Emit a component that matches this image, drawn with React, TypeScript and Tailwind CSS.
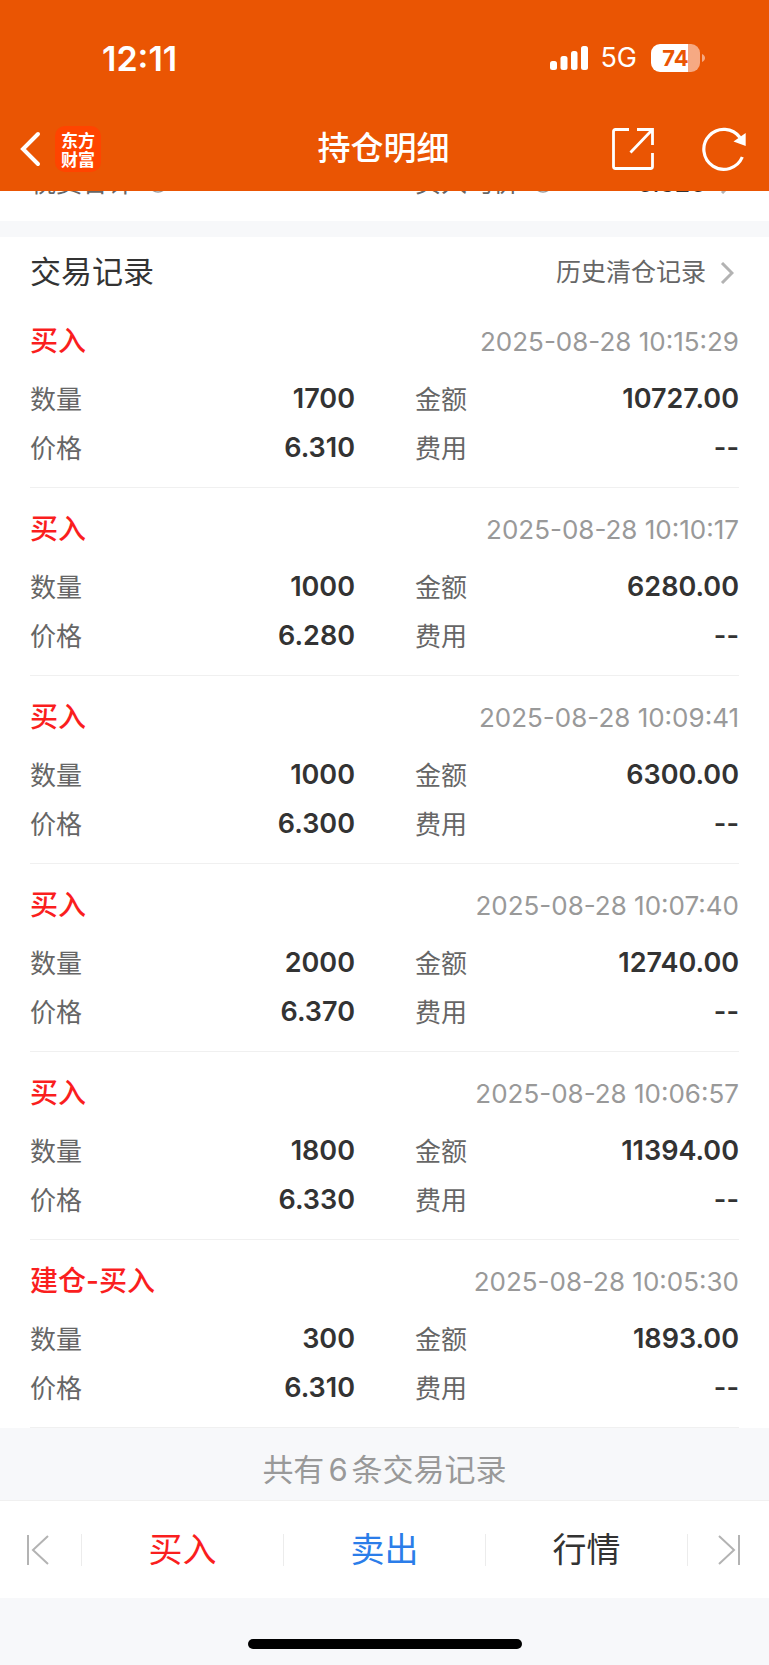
const FONT = "font-['Inter','Noto_Sans_CJK_SC',sans-serif]";

type Trade = {
  kind: string;
  time: string;
  quantity: string;
  price: string;
  amount: string;
  fee: string;
};

const trades: Trade[] = [
  { kind: '买入', time: '2025-08-28 10:15:29', quantity: '1700', price: '6.310', amount: '10727.00', fee: '--' },
  { kind: '买入', time: '2025-08-28 10:10:17', quantity: '1000', price: '6.280', amount: '6280.00', fee: '--' },
  { kind: '买入', time: '2025-08-28 10:09:41', quantity: '1000', price: '6.300', amount: '6300.00', fee: '--' },
  { kind: '买入', time: '2025-08-28 10:07:40', quantity: '2000', price: '6.370', amount: '12740.00', fee: '--' },
  { kind: '买入', time: '2025-08-28 10:06:57', quantity: '1800', price: '6.330', amount: '11394.00', fee: '--' },
  { kind: '建仓-买入', time: '2025-08-28 10:05:30', quantity: '300', price: '6.310', amount: '1893.00', fee: '--' },
];

function StatusBar() {
  return (
    <div className="flex h-[106px] items-center justify-between pt-[10px] pr-[64px] pl-[102px]">
      <span className="text-[34px] font-semibold">12:11</span>
      <div className="flex items-center">
        <svg width="38" height="24" viewBox="0 0 38 24" fill="currentColor" aria-hidden="true">
          <rect x="0" y="15" width="7" height="9" rx="2.500" />
          <rect x="10.500" y="10" width="7" height="14" rx="2.500" />
          <rect x="21" y="5" width="6.500" height="19" rx="2.500" />
          <rect x="31" y="0" width="7" height="24" rx="2.500" />
        </svg>
        <span className="ml-3 text-[27px]">5G</span>
        <div className="ml-[14px] flex items-center gap-[2px]">
          <div className="flex h-7 w-[49px] items-center justify-center rounded-[9px] bg-linear-to-r from-white from-75% to-[#f6a983] to-75% text-[22px] font-bold text-[#ea5503]">
            74
          </div>
          <svg width="3" height="8" viewBox="0 0 3 8" fill="#f6a983" aria-hidden="true">
            <path d="M0 0C4 1.500 4 6.500 0 8Z" />
          </svg>
        </div>
      </div>
    </div>
  );
}

function NavBar() {
  return (
    <div className="grid h-[85px] grid-cols-[1fr_auto_1fr] items-center pr-[21px] pl-[19px]">
      <div className="flex items-center gap-[13px]">
        <button type="button" aria-label="返回">
          <svg width="23" height="36" viewBox="0 0 23 36" fill="none" stroke="currentColor" strokeWidth="4" strokeLinecap="round" aria-hidden="true">
            <path d="M19 3L4 18L19 33" />
          </svg>
        </button>
        <div className="flex size-[46px] flex-col items-center justify-center rounded-[10px] bg-[#ff4400] font-['Noto_Sans_CJK_SC',sans-serif] text-[17px] leading-[19px] font-bold">
          <span>东方</span>
          <span>财富</span>
        </div>
      </div>
      <h1 className="text-[33px] font-medium">持仓明细</h1>
      <div className="flex items-center justify-end gap-[47px]">
        <button type="button" aria-label="分享">
          <svg width="44" height="44" viewBox="0 0 44 44" fill="none" stroke="currentColor" strokeWidth="2.800" aria-hidden="true">
            <path d="M18 2.500H4.500Q2.500 2.500 2.500 4.500V39.500Q2.500 41.500 4.500 41.500H39.500Q41.500 41.500 41.500 39.500V26" />
            <path d="M26 2.500H41.500V18M41 3L19.500 25.500" />
          </svg>
        </button>
        <button type="button" aria-label="刷新">
          <svg width="46" height="46" viewBox="0 0 46 46" fill="none" stroke="currentColor" strokeWidth="3.200" aria-hidden="true">
            <path d="M40.300 31A20 20 0 1 1 38 11.500" />
            <path d="M43.700 7V20L31.500 15.500Z" fill="currentColor" stroke="none" />
          </svg>
        </button>
      </div>
    </div>
  );
}

function HintMark() {
  return (
    <svg width="20" height="20" viewBox="0 0 20 20" fill="none" stroke="#999999" strokeWidth="1.500" aria-hidden="true">
      <circle cx="10" cy="10" r="9" />
    </svg>
  );
}

function ChevronRight() {
  return (
    <svg width="14" height="22" viewBox="0 0 14 22" fill="none" stroke="#b3b3b3" strokeWidth="3" aria-hidden="true">
      <path d="M2 1L12 11L2 21" />
    </svg>
  );
}

function SummaryTail() {
  return (
    <div className="flex h-[30px] items-end overflow-hidden bg-white px-[30px] pb-[21px]">
      <div className="grid w-full grid-cols-[325fr_324fr] gap-x-[60px] text-[26px] leading-[34px] text-[#666666]">
        <div className="flex items-center gap-[14px]">
          税费合计 <HintMark />
        </div>
        <div className="flex items-center gap-[14px] pr-[5px]">
          买入均价 <HintMark />
          <span className="ml-auto text-[25px] font-medium text-[#333333]">6.326</span>
          <ChevronRight />
        </div>
      </div>
    </div>
  );
}

function Field({ label, value }: { label: string; value: string }) {
  return (
    <div className="flex items-center justify-between">
      <dt className="text-[26px] text-[#666666]">{label}</dt>
      <dd className="text-[27px] font-semibold text-[#333333]">{value}</dd>
    </div>
  );
}

function TradeRow({ trade }: { trade: Trade }) {
  return (
    <li className="flex h-[188px] flex-col border-b border-[#f0f0f0] pt-5">
      <div className="flex h-[42px] items-center justify-between">
        <h3 className="text-[28px] font-medium text-[#fa1e1e]">{trade.kind}</h3>
        <time className="text-[26px] text-[#999999]">{trade.time}</time>
      </div>
      <dl className="mt-[13px] grid auto-rows-[49px] grid-cols-[325fr_324fr] gap-x-[60px]">
        <Field label="数量" value={trade.quantity} />
        <Field label="金额" value={trade.amount} />
        <Field label="价格" value={trade.price} />
        <Field label="费用" value={trade.fee} />
      </dl>
    </li>
  );
}

function Divider() {
  return <span className="h-8 w-px bg-[#ececec]" />;
}

function BottomBar() {
  return (
    <nav className="flex h-[98px] items-center border-t border-[#f0f0f0] bg-white text-[34px]">
      <button type="button" aria-label="上一个" className="flex w-[81px] items-center pl-[26px]">
        <svg width="24" height="30" viewBox="0 0 24 30" fill="none" stroke="#b3b3b3" strokeWidth="2" aria-hidden="true">
          <path d="M2 0V30M22 1L7 15L22 29" />
        </svg>
      </button>
      <Divider />
      <button type="button" className="flex-1 text-[#fa1e1e]">买入</button>
      <Divider />
      <button type="button" className="flex-1 text-[#2b7de9]">卖出</button>
      <Divider />
      <button type="button" className="flex-1 text-[#333333]">行情</button>
      <Divider />
      <button type="button" aria-label="下一个" className="flex w-[81px] items-center justify-end pr-[28px]">
        <svg width="24" height="30" viewBox="0 0 24 30" fill="none" stroke="#b3b3b3" strokeWidth="2" aria-hidden="true">
          <path d="M22 0V30M2 1L17 15L2 29" />
        </svg>
      </button>
    </nav>
  );
}

export default function App() {
  return (
    <div className={`min-h-screen bg-[#f7f8fa] ${FONT}`}>
      <header className="bg-[#ea5503] text-white">
        <StatusBar />
        <NavBar />
      </header>
      <main>
        <SummaryTail />
        <section className="mt-4 bg-white">
          <div className="flex h-[63px] items-center justify-between px-[30px] pt-2">
            <h2 className="text-[31px] text-[#333333]">交易记录</h2>
            <a href="#history" className="flex items-center gap-[14px] pr-[5px] text-[25px] text-[#666666]">
              历史清仓记录
              <ChevronRight />
            </a>
          </div>
          <ul className="px-[30px]">
            {trades.map((trade) => (
              <TradeRow key={trade.time} trade={trade} />
            ))}
          </ul>
        </section>
        <p className="flex h-[72px] items-center justify-center pt-3 text-[31px] text-[#999999]">
          共有<span className="mx-1">6</span>条交易记录
        </p>
      </main>
      <BottomBar />
      <div className="flex h-[67px] items-end justify-center pb-4">
        <div className="h-[10px] w-[274px] rounded-full bg-black" />
      </div>
    </div>
  );
}
